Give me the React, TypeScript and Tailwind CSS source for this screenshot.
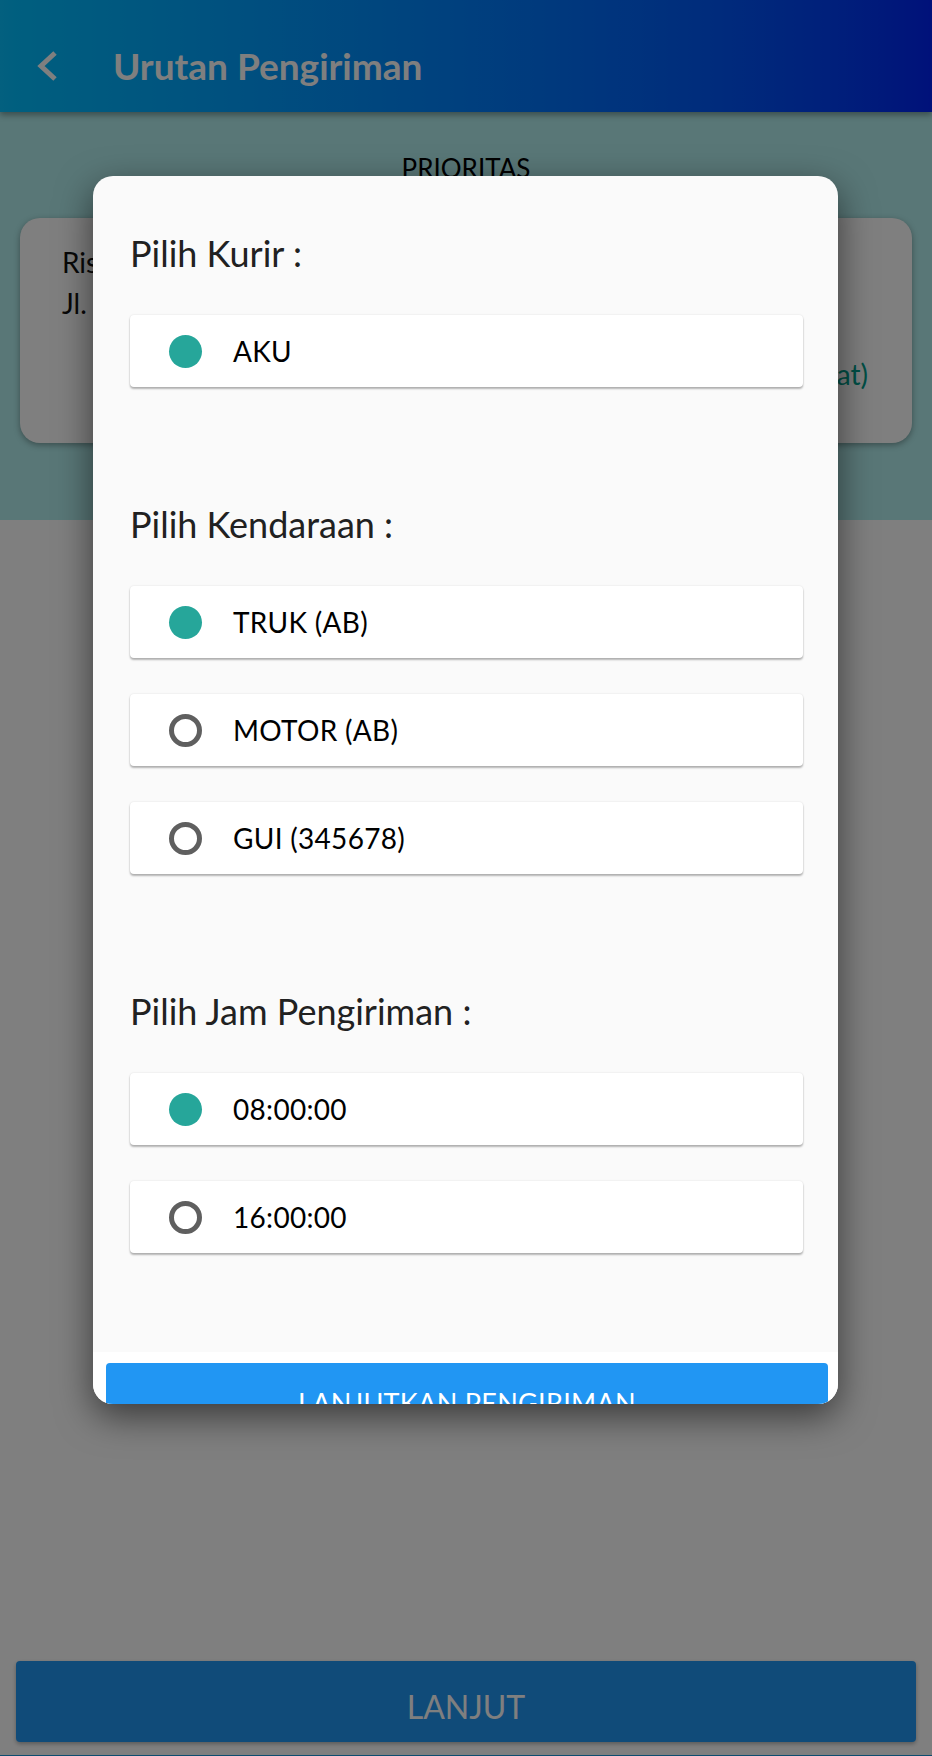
import React from 'react';

type Option = { label: string; selected?: boolean };

const kurir: Option[] = [{ label: 'AKU', selected: true }];
const kendaraan: Option[] = [
  { label: 'TRUK (AB)', selected: true },
  { label: 'MOTOR (AB)' },
  { label: 'GUI (345678)' },
];
const jam: Option[] = [{ label: '08:00:00', selected: true }, { label: '16:00:00' }];

const Radio = ({ selected }: { selected?: boolean }) =>
  selected ? (
    <div className="w-[33px] h-[33px] rounded-full bg-[#26a69a] shrink-0" />
  ) : (
    <div className="w-[33px] h-[33px] rounded-full border-[5px] border-[#5f5f5f] shrink-0" />
  );

const OptionCard = ({ option }: { option: Option }) => (
  <div className="h-[72px] bg-white rounded-[4px] shadow-[0_2px_2px_rgba(0,0,0,0.28),0_0_2px_rgba(0,0,0,0.12)] flex items-center pl-[39px] gap-[31px]">
    <Radio selected={option.selected} />
    <span className="text-[28px] text-black tracking-[0.3px]">{option.label}</span>
  </div>
);

const Section = ({ title, options, first }: { title: string; options: Option[]; first?: boolean }) => (
  <div className={first ? 'flex flex-col' : 'flex flex-col mt-[115px]'}>
    <h3 className="text-[36px] leading-[44px] text-[#212121]">{title}</h3>
    <div className="flex flex-col gap-[36px] mt-[40px]">
      {options.map((o) => (
        <OptionCard key={o.label} option={o} />
      ))}
    </div>
  </div>
);

export default function App() {
  return (
    <div className="relative w-[932px] h-[1756px] bg-white flex flex-col overflow-hidden font-[Lato,sans-serif]">
      {/* header */}
      <header className="h-[112px] shrink-0 bg-gradient-to-r from-[#07c0ff] to-[#0022f4] flex items-center pt-[20px] shadow-[0_3px_6px_rgba(0,0,0,0.35)] z-10">
        <svg width="75" height="40" viewBox="0 0 75 40" className="shrink-0">
          <polyline points="55,7 41,20 55,33" fill="none" stroke="white" strokeWidth="5" />
        </svg>
        <h1 className="ml-[38px] text-[37px] font-bold text-white">Urutan Pengiriman</h1>
      </header>

      {/* prioritas */}
      <section className="h-[408px] shrink-0 bg-[#b2eeee] flex flex-col pt-[40px]">
        <div className="text-center text-[26px] leading-[32px] text-black">PRIORITAS</div>
        <div className="mt-[34px] mx-[20px] h-[225px] bg-white rounded-[20px] shadow-[0_2px_6px_rgba(0,0,0,0.35)] pl-[42px] pr-[44px] pt-[24px] flex flex-col">
          <div className="text-[28px] leading-[41px] text-[#111]">Riski Pratama</div>
          <div className="text-[28px] leading-[41px] text-[#111]">Jl. Malioboro No. 12</div>
          <div className="text-[28px] leading-[41px] text-[#009e8c] text-right mt-[30px]">(Lihat Alamat)</div>
        </div>
      </section>

      <div className="flex-1" />

      <div className="mx-[16px] mb-[13px] h-[81px] bg-[#2196f3] rounded-[4px] shadow-[0_2px_4px_rgba(0,0,0,0.3)] flex items-center justify-center">
        <span className="text-[32px] text-white mt-[10px]">LANJUT</span>
      </div>
      <div className="h-px bg-[#1a9ae0]" />

      {/* overlay */}
      <div className="absolute inset-0 bg-black/50 z-20" />

      {/* dialog */}
      <div className="absolute left-[93px] top-[176px] w-[745px] h-[1228px] bg-[#fafafa] rounded-[20px] overflow-hidden shadow-[0_12px_36px_rgba(0,0,0,0.55)] z-30 flex flex-col">
        <div className="pt-[55px] pl-[37px] pr-[35px] pb-[99px]">
          <Section title="Pilih Kurir :" options={kurir} first />
          <Section title="Pilih Kendaraan :" options={kendaraan} />
          <Section title="Pilih Jam Pengiriman :" options={jam} />
        </div>
        <div className="bg-white pt-[11px] pl-[13px] pr-[10px]">
          <div className="h-[80px] bg-[#2196f3] rounded-[4px] flex items-center justify-center">
            <span className="text-[27px] leading-[32px] text-white tracking-[0.3px]">LANJUTKAN PENGIRIMAN</span>
          </div>
        </div>
      </div>
    </div>
  );
}
